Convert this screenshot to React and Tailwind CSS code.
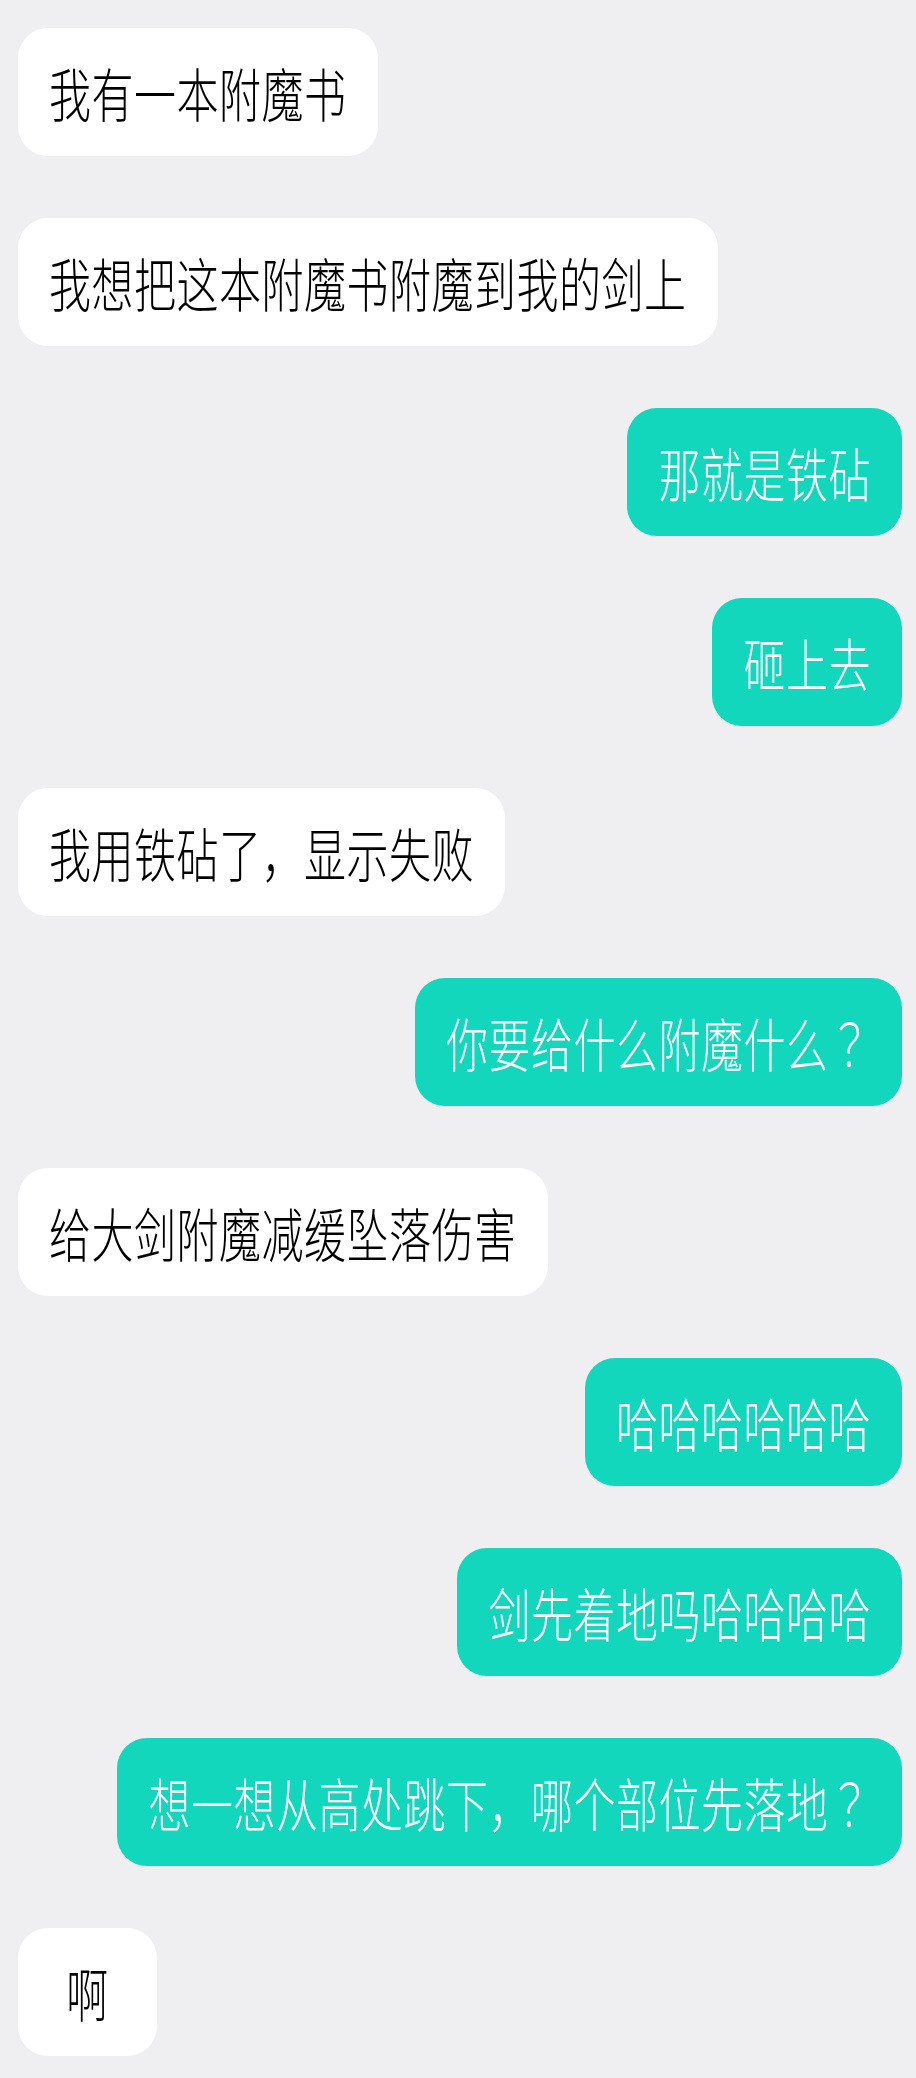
const messages = [
  { from: "them", text: "我有一本附魔书" },
  { from: "them", text: "我想把这本附魔书附魔到我的剑上" },
  { from: "me", text: "那就是铁砧" },
  { from: "me", text: "砸上去" },
  { from: "them", text: "我用铁砧了，显示失败" },
  { from: "me", text: "你要给什么附魔什么？" },
  { from: "them", text: "给大剑附魔减缓坠落伤害" },
  { from: "me", text: "哈哈哈哈哈哈" },
  { from: "me", text: "剑先着地吗哈哈哈哈" },
  { from: "me", text: "想一想从高处跳下，哪个部位先落地？" },
  { from: "them", text: "啊" },
];

// the full-width question mark sits centred in its cell in the screenshot
function renderText(text) {
  return text.split(/(？)/).map((part, i) =>
    part === "？" ? (
      <span key={i} style={{ fontFamily: '"Noto Sans CJK TC", sans-serif' }}>
        ？
      </span>
    ) : (
      part
    )
  );
}

function Bubble({ from, text }) {
  const mine = from === "me";
  return (
    <div className={`flex ${mine ? "justify-end" : "justify-start"}`}>
      <div
        className={`h-[128px] min-w-[139px] px-[31px] rounded-[30px] flex items-center justify-center ${
          mine ? "bg-[#13d7bd] text-white" : "bg-white text-black"
        }`}
      >
        <span className="inline-block scale-y-[1.38] whitespace-nowrap text-[42px] leading-none font-light tracking-[0.5px]">
          {renderText(text)}
        </span>
      </div>
    </div>
  );
}

export default function App() {
  return (
    <div
      className="min-h-[2078px] bg-[#efeff1] pt-[28px] pl-[18px] pr-[14px] flex flex-col gap-[62px]"
      style={{ fontFamily: '"Noto Sans CJK SC", "Noto Sans", sans-serif' }}
    >
      {messages.map((m, i) => (
        <Bubble key={i} {...m} />
      ))}
    </div>
  );
}
